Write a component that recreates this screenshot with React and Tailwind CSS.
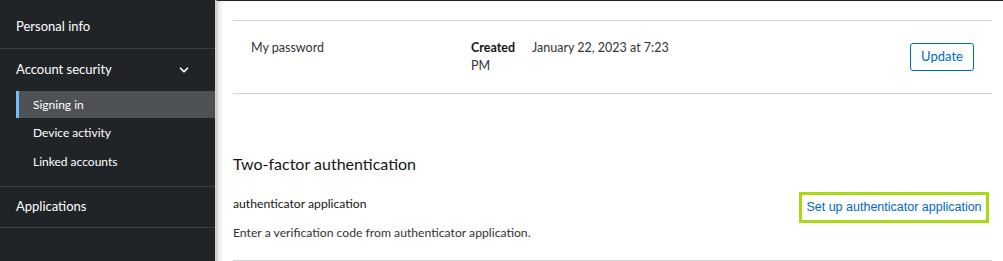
import { ChevronDown } from "lucide-react"

const font = { fontFamily: 'Lato, "Noto Sans", sans-serif' }

export default function App() {
  return (
    <div className="flex h-[261px] w-[1003px] overflow-hidden bg-white" style={font}>
      {/* Sidebar */}
      <aside className="w-[215px] shrink-0 bg-[#212427] text-white">
        <div className="flex h-[49px] items-center border-b border-[#3c3f42] px-4 pt-[5px] text-[13px]">
          Personal info
        </div>
        <div className="h-[138px] border-b border-[#3c3f42]">
          <div className="flex h-[42px] items-center justify-between pl-4 pr-[24px] text-[13px]">
            <span>Account security</span>
            <ChevronDown size={14} strokeWidth={3} />
          </div>
          <div className="flex h-[27px] items-center ml-4 border-l-[3px] border-[#73bcf7] bg-[#4f5255] pl-[14px] text-[12px]">
            Signing in
          </div>
          <div className="flex h-[28px] items-center pl-[33px] pt-[2px] text-[12px]">Device activity</div>
          <div className="flex h-[28px] items-center pl-[33px] pt-[3px] text-[12px]">Linked accounts</div>
        </div>
        <div className="flex h-[41px] items-center border-b border-[#3c3f42] px-4 text-[13px]">
          Applications
        </div>
      </aside>

      {/* Main */}
      <main className="relative flex-1 border-t border-[#212427] border-l-[3px] border-l-[#d2d2d2]">
        <div className="pointer-events-none absolute inset-y-0 left-0 w-[6px] bg-gradient-to-r from-[#e6e6e6] to-white" />
        <div className="pl-[15px] pr-[11px] pt-[19px]">
          <div className="flex h-[74px] items-start border-y border-[#d2d2d2] pl-[18px] pr-[18px] text-[12.5px] text-[#151515]">
            <div className="w-[220px] shrink-0 pt-[18px] text-[#333]">My password</div>
            <div className="w-[210px] shrink-0 pt-[18px] leading-[18px]">
              <span className="mr-[17px] font-bold">Created</span>
              <span className="text-[#333]">January 22, 2023 at 7:23 PM</span>
            </div>
            <div className="flex-1" />
            <button className="mt-[22px] h-[28px] w-[64px] rounded-[3px] border border-[#0066cc] text-[13px] text-[#0066cc]">
              Update
            </button>
          </div>

          <h2 className="mt-[58px] text-[16px] text-[#151515]">Two-factor authentication</h2>
          <div className="mt-[10px] flex items-start justify-between border-b border-[#d2d2d2] pb-[17px]">
            <div className="text-[12.2px] text-[#151515]">
              <div className="pt-[9px]">authenticator application</div>
              <div className="mt-[11px] text-[#333]">Enter a verification code from authenticator application.</div>
            </div>
            <a className="mr-[3px] mt-[6px] flex h-[31px] w-[190px] items-center justify-center border-[3px] border-[#a8d914] text-[12.5px] text-[#0066cc]" style={{ fontFamily: '"Liberation Sans", Arial, sans-serif' }}>
              Set up authenticator application
            </a>
          </div>
        </div>
      </main>
    </div>
  )
}
